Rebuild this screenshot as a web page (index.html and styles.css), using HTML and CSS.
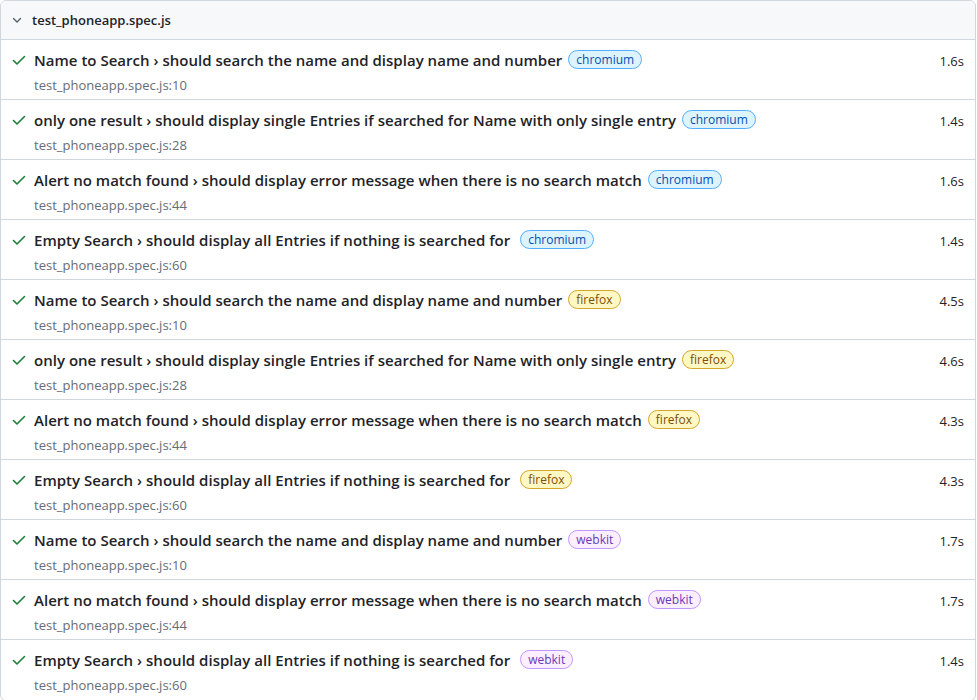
FILE: index.html
```html
<!DOCTYPE html>
<html>
<head>
<meta charset="utf-8">
<link rel="stylesheet" href="styles.css">
</head>
<body>
<div class="file">
  <div class="file-header">
    <svg class="chev" width="16" height="16" viewBox="0 0 16 16"><path d="M4.5 6.5 8 10l3.5-3.5" fill="none" stroke="#57606a" stroke-width="1.4" stroke-linecap="round" stroke-linejoin="round"/></svg>
    <span class="file-name">test_phoneapp.spec.js</span>
  </div>
  <div id="rows"></div>
</div>
<script src="app.js"></script>
</body>
</html>
```
FILE: app.js
```js
const tests = [
  ["Name to Search › should search the name and display name and number", "chromium", "10", "1.6s"],
  ["only one result › should display single Entries if searched for Name with only single entry", "chromium", "28", "1.4s"],
  ["Alert no match found › should display error message when there is no search match", "chromium", "44", "1.6s"],
  ["Empty Search › should display all Entries if nothing is searched for ", "chromium", "60", "1.4s"],
  ["Name to Search › should search the name and display name and number", "firefox", "10", "4.5s"],
  ["only one result › should display single Entries if searched for Name with only single entry", "firefox", "28", "4.6s"],
  ["Alert no match found › should display error message when there is no search match", "firefox", "44", "4.3s"],
  ["Empty Search › should display all Entries if nothing is searched for ", "firefox", "60", "4.3s"],
  ["Name to Search › should search the name and display name and number", "webkit", "10", "1.7s"],
  ["Alert no match found › should display error message when there is no search match", "webkit", "44", "1.7s"],
  ["Empty Search › should display all Entries if nothing is searched for ", "webkit", "60", "1.4s"]
];
const root = document.getElementById("rows");
for (const [title, proj, line, dur] of tests) {
  const row = document.createElement("div");
  row.className = "test";
  row.innerHTML = `
    <div class="test-main">
      <svg class="check" width="16" height="16" viewBox="0 0 16 16"><path d="M2.5 8.5 6 12l7.5-7.5" fill="none" stroke="#1a7f37" stroke-width="1.6" stroke-linecap="round" stroke-linejoin="round"/></svg>
      <div class="test-body">
        <div class="test-title"><span class="title-text"></span><span class="badge badge-${proj}">${proj}</span></div>
        <div class="test-loc">test_phoneapp.spec.js:${line}</div>
      </div>
      <div class="test-dur">${dur}</div>
    </div>`;
  row.querySelector(".title-text").textContent = title;
  root.appendChild(row);
}
```
FILE: styles.css
```css
* { box-sizing: border-box; }
body {
  margin: 0;
  background: #ffffff;
  font-family: "Open Sans", "Noto Sans", sans-serif;
  color: #1f2328;
}
.file {
  width: 976px;
  border: 1px solid #d0d7de;
  border-radius: 6px;
  overflow: hidden;
}
.file-header {
  height: 39px;
  background: #f6f8fa;
  border-bottom: 1px solid #d0d7de;
  display: flex;
  align-items: center;
  padding-left: 8px;
}
.chev { margin-right: 7px; }
.file-name {
  font-size: 13px;
  font-weight: 600;
}
.test {
  height: 60px;
  border-bottom: 1px solid #d0d7de;
}
.test:last-child { border-bottom: none; }
.test-main {
  display: flex;
  padding: 0 11px 0 10px;
}
.check { margin-top: 12px; margin-right: 7px; flex: none; }
.test-body { flex: 1; }
.test-title {
  display: flex;
  align-items: center;
  height: 39px;
  font-size: 15px;
  font-weight: 600;
  white-space: pre;
}
.title-text { letter-spacing: 0.02px; }
.badge {
  display: inline-block;
  margin-left: 6px;
  height: 19px;
  line-height: 18px;
  padding: 0 7px;
  border-radius: 10px;
  border: 1px solid;
  font-size: 12px;
  font-weight: 400;
}
.badge-chromium { background: #ddf4ff; border-color: #54aeff; color: #0550ae; }
.badge-firefox { background: #fff8c5; border-color: #d4a72c; color: #7d4e00; }
.badge-webkit { background: #fbefff; border-color: #c297ff; color: #6639ba; }
.test-loc {
  font-size: 13px;
  color: #656d76;
  line-height: 14px;
  margin-top: -1px;
}
.test-dur {
  font-size: 13px;
  padding-top: 12px;
  color: #1f2328;
}
```
